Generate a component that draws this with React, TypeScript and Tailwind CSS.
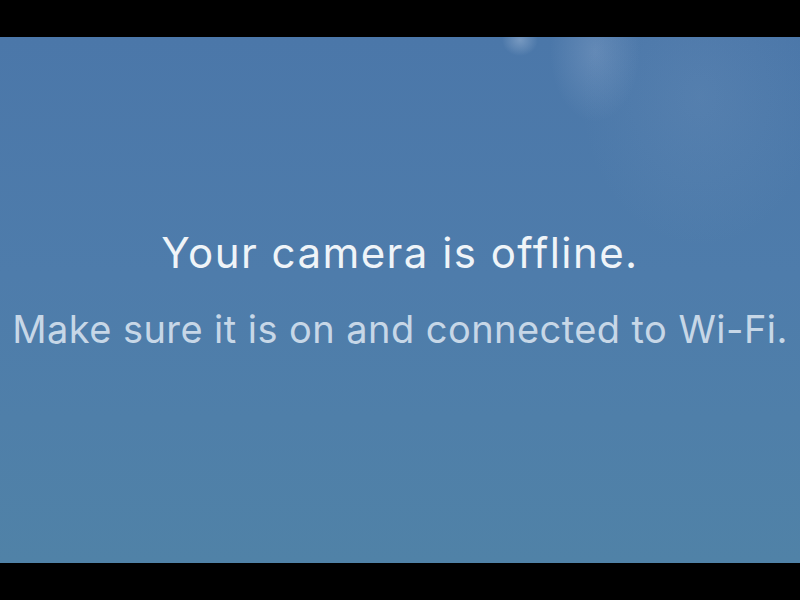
export default function App() {
  return (
    <div className="w-[800px] h-[600px] bg-black flex flex-col overflow-hidden">
      <div className="h-[37px] shrink-0 bg-black" />
      <div className="relative h-[526px] shrink-0 overflow-hidden bg-[linear-gradient(180deg,#4b77a9_0%,#4e7cab_45%,#5082a7_100%)]">
        <div className="absolute inset-0 bg-[radial-gradient(ellipse_45px_70px_at_595px_15px,rgba(170,190,220,0.25),transparent)]" />
        <div className="absolute inset-0 bg-[radial-gradient(ellipse_18px_16px_at_520px_3px,rgba(200,215,235,0.35),transparent)]" />
        <div className="absolute inset-0 bg-[radial-gradient(ellipse_120px_150px_at_700px_60px,rgba(150,175,205,0.12),transparent)]" />
        <div className="relative h-full flex flex-col items-center pt-[192px] font-['Inter','Liberation_Sans',sans-serif]">
          <div className="text-[42px] leading-[48px] tracking-[1.45px] text-[#eff4f8] whitespace-nowrap">Your camera is offline.</div>
          <div className="mt-[30px] text-[38px] leading-[44px] tracking-[0.44px] text-[#c7d7e7] whitespace-nowrap">Make sure it is on and connected to Wi-Fi.</div>
        </div>
      </div>
      <div className="h-[37px] shrink-0 bg-black" />
    </div>
  );
}
